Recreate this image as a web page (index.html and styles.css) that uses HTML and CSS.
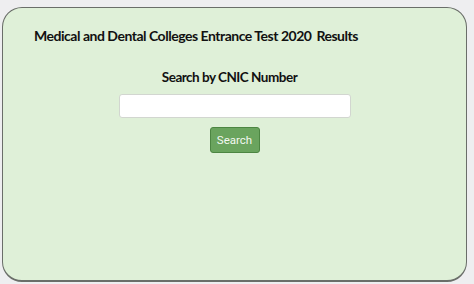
FILE: index.html
```html
<!DOCTYPE html>
<html>
<head>
<meta charset="utf-8">
<link rel="stylesheet" href="styles.css">
</head>
<body>
<div class="card">
  <h1 class="title">Medical and Dental Colleges Entrance Test 2020 <span class="gap">Results</span></h1>
  <div class="search">
    <h2 class="label">Search by CNIC Number</h2>
    <input class="field" type="text">
    <button class="btn">Search</button>
  </div>
</div>
</body>
</html>
```
FILE: styles.css
```css
html, body {
  margin: 0;
  padding: 0;
  background: #eeeef0;
}
body {
  padding: 7px 0 0 2px;
  font-family: "Lato", "Open Sans", sans-serif;
}
.card {
  box-sizing: border-box;
  width: 465px;
  height: 275px;
  background: #dff0d8;
  border: 1.5px solid #6a6e69;
  border-bottom-width: 2px;
  border-radius: 20px;
  padding: 19px 0 0 31px;
}
.title {
  margin: 0;
  font-size: 14px;
  font-weight: 700;
  color: #111;
  line-height: 18px;
  letter-spacing: -0.48px;
}
.gap {
  margin-left: 2px;
}
.search {
  margin: 23px 0 0 -31px;
  display: flex;
  flex-direction: column;
  align-items: center;
}
.label {
  margin: 0 0 0 -10px;
  font-size: 13.5px;
  font-weight: 700;
  color: #111;
  line-height: 18px;
  letter-spacing: -0.5px;
}
.field {
  box-sizing: border-box;
  margin-top: 8px;
  width: 232px;
  height: 24px;
  background: #fff;
  border: 1px solid #d2d6d0;
  border-radius: 3px;
  outline: none;
}
.btn {
  box-sizing: border-box;
  margin-top: 9px;
  width: 50px;
  height: 26px;
  background: #6aa45e;
  border: 1px solid #4c8542;
  border-radius: 3px;
  color: #f3f8f1;
  font-family: "Roboto", sans-serif;
  font-size: 11.5px;
  padding: 0;
}
```
